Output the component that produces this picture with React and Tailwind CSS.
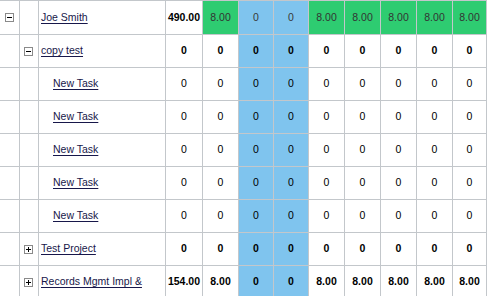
import React from 'react';

const widths = ['w-[20px]', 'w-[19px]', 'w-[127px]', 'w-[37px]', 'w-[36px]', 'w-[35px]', 'w-[35px]', 'w-[36px]', 'w-[36px]', 'w-[36px]', 'w-[36px]'];

const rows = [
  { level: 0, toggle: 'minus', name: 'Joe Smith', total: '490.00', bold: true, summary: true, vals: ['8.00', '0', '0', '8.00', '8.00', '8.00', '8.00', '8.00'] },
  { level: 1, toggle: 'minus', name: 'copy test', total: '0', bold: true, vals: ['0', '0', '0', '0', '0', '0', '0', '0'] },
  { level: 2, name: 'New Task', total: '0', vals: ['0', '0', '0', '0', '0', '0', '0', '0'] },
  { level: 2, name: 'New Task', total: '0', vals: ['0', '0', '0', '0', '0', '0', '0', '0'] },
  { level: 2, name: 'New Task', total: '0', vals: ['0', '0', '0', '0', '0', '0', '0', '0'] },
  { level: 2, name: 'New Task', total: '0', vals: ['0', '0', '0', '0', '0', '0', '0', '0'] },
  { level: 2, name: 'New Task', total: '0', vals: ['0', '0', '0', '0', '0', '0', '0', '0'] },
  { level: 1, toggle: 'plus', name: 'Test Project', total: '0', bold: true, vals: ['0', '0', '0', '0', '0', '0', '0', '0'] },
  { level: 1, toggle: 'plus', name: 'Records Mgmt Impl &', total: '154.00', bold: true, vals: ['8.00', '0', '0', '8.00', '8.00', '8.00', '8.00', '8.00'] },
];

const Toggle = ({ type }) => (
  <svg width="9" height="9" viewBox="0 0 9 9" className="block">
    <rect x="0.5" y="0.5" width="8" height="8" fill="#fff" stroke="#8a8a8a" />
    <line x1="2" y1="4.5" x2="7" y2="4.5" stroke="#000" />
    {type === 'plus' && <line x1="4.5" y1="2" x2="4.5" y2="7" stroke="#000" />}
  </svg>
);

const Row = ({ row, first }) => {
  const weight = row.bold ? 'font-bold text-black' : 'font-normal text-black';
  return (
    <div className={`flex ${first ? 'h-[34px]' : 'h-[33px]'} border-b border-[#c3c7cb]`}>
      <div className={`${widths[0]} shrink-0 border-r border-[#c3c7cb] flex items-center pl-[5px]`}>
        {row.level === 0 && row.toggle && <Toggle type={row.toggle} />}
      </div>
      <div className={`${widths[1]} shrink-0 border-r border-[#c3c7cb] flex items-center pl-[4px]`}>
        {row.level === 1 && row.toggle && <Toggle type={row.toggle} />}
      </div>
      <div className={`${widths[2]} shrink-0 border-r border-[#c3c7cb] flex items-center whitespace-nowrap overflow-hidden ${row.level === 2 ? 'pl-[14px]' : 'pl-[2px]'}`}>
        <span className="underline underline-offset-2 text-[#17174a]">{row.name}</span>
      </div>
      <div className={`${widths[3]} shrink-0 border-r border-[#c3c7cb] flex items-center justify-center ${weight}`}>
        {row.total}
      </div>
      {row.vals.map((v, i) => {
        const col = i + 4;
        const blue = i === 1 || i === 2;
        let cls = 'bg-white';
        let txt = weight;
        if (blue) {
          cls = 'bg-[#7fc4ee]';
          if (row.summary) txt = 'font-normal text-[#383838]';
        } else if (row.summary) {
          cls = 'bg-[#2ecc71]';
          txt = 'font-normal text-[#333333]';
        }
        const w = col < widths.length ? `${widths[col]} shrink-0` : 'flex-1';
        return (
          <div key={i} className={`${w} ${cls} ${txt} border-r border-[#c3c7cb] flex items-center justify-center`}>
            {v}
          </div>
        );
      })}
    </div>
  );
};

export default function App() {
  return (
    <div className="w-[487px] h-[296px] overflow-hidden bg-white text-[10.5px] font-['Liberation_Sans',Arial,sans-serif]">
      <div className="border-t border-[#c3c7cb]">
        {rows.map((row, i) => (
          <Row key={i} row={row} first={i === 0} />
        ))}
      </div>
    </div>
  );
}
